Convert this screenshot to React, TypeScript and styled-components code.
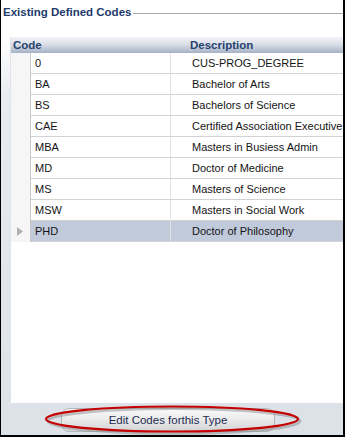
import React from 'react';
import styled, { createGlobalStyle } from 'styled-components';

type CodeRow = {
  code: string;
  description: string;
  selected?: boolean;
};

const rows: Array<CodeRow> = [
  { code: '0', description: 'CUS-PROG_DEGREE' },
  { code: 'BA', description: 'Bachelor of Arts' },
  { code: 'BS', description: 'Bachelors of Science' },
  { code: 'CAE', description: 'Certified Association Executive' },
  { code: 'MBA', description: 'Masters in Busiess Admin' },
  { code: 'MD', description: 'Doctor of Medicine' },
  { code: 'MS', description: 'Masters of Science' },
  { code: 'MSW', description: 'Masters in Social Work' },
  { code: 'PHD', description: 'Doctor of Philosophy', selected: true },
];

const GlobalStyle = createGlobalStyle`
  html, body {
    margin: 0;
    padding: 0;
    background: #ffffff;
  }

  body {
    font-family: 'Liberation Sans', Arial, sans-serif;
  }
`;

const Frame = styled.div`
  width: 345px;
  height: 437px;
  box-sizing: border-box;
  border-left: 1px solid #000;
  border-right: 2px solid #000;
  border-bottom: 2px solid #000;
  background: #fff;
  display: flex;
  flex-direction: column;
  position: relative;
  overflow: hidden;
`;

const GroupTitleRow = styled.div`
  height: 37px;
  flex: none;
  display: flex;
  align-items: flex-start;
  padding: 5px 0 0 2px;
  box-sizing: border-box;
`;

const GroupTitle = styled.span`
  font-size: 11.5px;
  font-weight: bold;
  color: #1e3a6c;
  line-height: 15px;
  white-space: nowrap;
`;

const GroupLine = styled.div`
  flex: 1;
  margin: 8px 0 0 2px;
  border-top: 1px solid #a7aab0;
`;

const Body = styled.div`
  flex: 1;
  display: flex;
  min-height: 0;
`;

const SideStrip = styled.div`
  width: 9px;
  flex: none;
  background: linear-gradient(#ffffff 0px, #e8ebf0 60px, #dde2e9 100%);
`;

const Panel = styled.div`
  flex: 1;
  display: flex;
  flex-direction: column;
  border-left: 1px solid #dfe3ea;
`;

const Grid = styled.div`
  flex: 1;
  background: #fff;
`;

const HeaderRow = styled.div`
  height: 16px;
  display: grid;
  grid-template-columns: 177px 1fr;
  align-items: center;
  background: linear-gradient(#f1f3f6 0%, #dbe0e8 45%, #a5b1c5 100%);
`;

const HeaderCell = styled.div`
  padding-left: 2px;
  font-size: 11.5px;
  font-weight: bold;
  color: #26426f;
  line-height: 16px;
`;

const Row = styled.div<{ selected?: boolean }>`
  height: 21px;
  display: grid;
  grid-template-columns: 20px 140px 1fr;
`;

const Indicator = styled.div`
  box-sizing: border-box;
  background: #f6f6f6;
  border-right: 1px solid #c9c9c9;
  display: flex;
  align-items: center;
  padding-left: 6px;
`;

const Cell = styled.div<{ selected?: boolean; pad: number; divider?: boolean }>`
  box-sizing: border-box;
  padding-left: ${({ pad }) => pad}px;
  border-bottom: 1px solid #d2d2d2;
  border-right: ${({ divider }) => (divider ? '1px solid #e2e2e2' : 'none')};
  background: ${({ selected }) => (selected ? '#c1cadb' : '#fff')};
  font-size: 11px;
  line-height: 20px;
  color: #141414;
  white-space: nowrap;
  overflow: hidden;
`;

const Footer = styled.div`
  height: 32px;
  flex: none;
  background: #dde2e9;
  display: flex;
  justify-content: flex-start;
  padding: 5px 0 0 50px;
  box-sizing: border-box;
  position: relative;
`;

const EditButton = styled.button`
  width: 214px;
  height: 24px;
  border: 1px solid #b3b6bb;
  border-radius: 8px;
  background: linear-gradient(#fafafa 0%, #e9e9e9 50%, #d3d4d6 100%);
  font-family: 'Liberation Sans', Arial, sans-serif;
  font-size: 11.5px;
  color: #1e2c52;
  padding: 0;
  cursor: pointer;
`;

const Highlight = styled.svg`
  position: absolute;
  left: 25px;
  top: 1px;
  pointer-events: none;
`;

const RowArrow = () => (
  <svg width="6" height="9" viewBox="0 0 6 9">
    <path d="M0 0 L6 4.5 L0 9 Z" fill="#b0b0b0" />
  </svg>
);

const App = () => (
  <>
    <GlobalStyle />
    <Frame>
      <GroupTitleRow>
        <GroupTitle>Existing Defined Codes</GroupTitle>
        <GroupLine />
      </GroupTitleRow>
      <Body>
        <SideStrip />
        <Panel>
          <Grid>
            <HeaderRow>
              <HeaderCell>Code</HeaderCell>
              <HeaderCell>Description</HeaderCell>
            </HeaderRow>
            {rows.map((row) => (
              <Row key={row.code} selected={row.selected}>
                <Indicator>{row.selected && <RowArrow />}</Indicator>
                <Cell pad={4} divider selected={row.selected}>{row.code}</Cell>
                <Cell pad={21} selected={row.selected}>{row.description}</Cell>
              </Row>
            ))}
          </Grid>
          <Footer>
            <EditButton>Edit Codes forthis Type</EditButton>
            <Highlight width="270" height="32" viewBox="0 0 270 32">
              <ellipse cx="138" cy="17" rx="126" ry="12.5" fill="none" stroke="#8a8a8a" strokeOpacity="0.5" strokeWidth="3" />
              <ellipse cx="136" cy="15" rx="126" ry="12.5" fill="none" stroke="#c40000" strokeWidth="2.2" />
            </Highlight>
          </Footer>
        </Panel>
      </Body>
    </Frame>
  </>
);

export default App;
